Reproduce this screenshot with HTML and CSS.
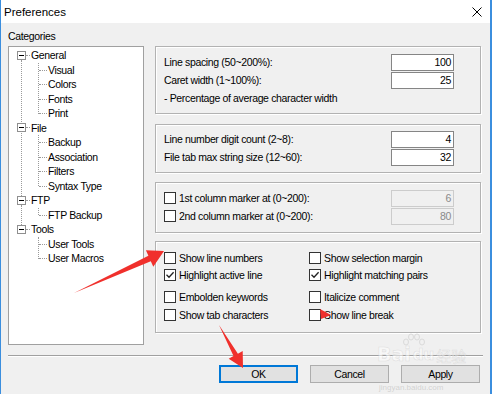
FILE: index.html
```html
<!DOCTYPE html>
<html>
<head>
<meta charset="utf-8">
<link rel="stylesheet" href="styles.css">
</head>
<body>
<div class="window">
  <div class="titlebar">
    <span class="title">Preferences</span>
    <svg class="close" width="10" height="10" viewBox="0 0 10 10"><path d="M0.5 0.5L9.5 9.5M9.5 0.5L0.5 9.5" stroke="#000" stroke-width="1" fill="none"/></svg>
  </div>
  <div class="content">
    <div class="main">
      <div class="left">
        <div class="cat-label">Categories</div>
        <div class="tree">
          <div class="node">
            <div class="trow top"><span class="exp"></span><span>General</span></div>
            <div class="kids">
              <div class="trow kid">Visual</div>
              <div class="trow kid">Colors</div>
              <div class="trow kid">Fonts</div>
              <div class="trow kid">Print</div>
            </div>
          </div>
          <div class="node">
            <div class="trow top"><span class="exp"></span><span>File</span></div>
            <div class="kids">
              <div class="trow kid">Backup</div>
              <div class="trow kid">Association</div>
              <div class="trow kid">Filters</div>
              <div class="trow kid">Syntax Type</div>
            </div>
          </div>
          <div class="node">
            <div class="trow top"><span class="exp"></span><span>FTP</span></div>
            <div class="kids">
              <div class="trow kid">FTP Backup</div>
            </div>
          </div>
          <div class="node">
            <div class="trow top"><span class="exp"></span><span>Tools</span></div>
            <div class="kids">
              <div class="trow kid">User Tools</div>
              <div class="trow kid">User Macros</div>
            </div>
          </div>
        </div>
      </div>
      <div class="right">
        <div class="group g1">
          <div class="frow"><span class="lbl">Line spacing (50~200%):</span><span class="num">100</span></div>
          <div class="frow"><span class="lbl">Caret width (1~100%):</span><span class="num">25</span></div>
          <div class="frow"><span class="lbl">- Percentage of average character width</span></div>
        </div>
        <div class="group g2">
          <div class="frow"><span class="lbl">Line number digit count (2~8):</span><span class="num">4</span></div>
          <div class="frow"><span class="lbl">File tab max string size (12~60):</span><span class="num">32</span></div>
        </div>
        <div class="group g3">
          <div class="frow"><span class="box"></span><span class="lbl">1st column marker at (0~200):</span><span class="num dis">6</span></div>
          <div class="frow"><span class="box"></span><span class="lbl">2nd column marker at (0~200):</span><span class="num dis">80</span></div>
        </div>
        <div class="group g4">
          <div class="cb r1"><span class="box"></span><span>Show line numbers</span></div>
          <div class="cb r1"><span class="box"></span><span>Show selection margin</span></div>
          <div class="cb r1"><span class="box checked"><svg width="10" height="10" viewBox="0 0 10 10"><path d="M1.5 4.8L4 7.3L8.6 2.2" stroke="#222" stroke-width="1.3" fill="none"/></svg></span><span>Highlight active line</span></div>
          <div class="cb r1"><span class="box checked"><svg width="10" height="10" viewBox="0 0 10 10"><path d="M1.5 4.8L4 7.3L8.6 2.2" stroke="#222" stroke-width="1.3" fill="none"/></svg></span><span>Highlight matching pairs</span></div>
          <div class="cb r2 gap"><span class="box"></span><span>Embolden keywords</span></div>
          <div class="cb r2 gap"><span class="box"></span><span>Italicize comment</span></div>
          <div class="cb r2"><span class="box"></span><span>Show tab characters</span></div>
          <div class="cb r2"><span class="box"></span><span>Show line break</span></div>
        </div>
      </div>
    </div>
    <div class="sep"></div>
    <div class="btns">
      <div class="btn ok">OK</div>
      <div class="btn">Cancel</div>
      <div class="btn">Apply</div>
    </div>
  </div>
  <div class="watermark">
    <div class="wm-logo">
      <span class="wm-bai">Bai</span>
      <span class="wm-du">
        <svg class="paw" width="26" height="18" viewBox="0 0 26 18"><g fill="none" stroke="#dadada" stroke-width="1"><ellipse cx="5" cy="9" rx="2.5" ry="3"/><ellipse cx="10" cy="4" rx="2.5" ry="3"/><ellipse cx="16" cy="4" rx="2.5" ry="3"/><ellipse cx="21" cy="9" rx="2.5" ry="3"/></g></svg>
        du
      </span>
      <span class="wm-jy">经验</span>
    </div>
    <div class="wm-url">jingyan.baidu.com</div>
  </div>
  <svg class="arrows" width="492" height="394" viewBox="0 0 492 394">
    <polygon fill="#f0302c" points="73,293 147.4,255.8 144.9,250.3 163,251 152.3,266.7 149.8,261.2"/>
    <polygon fill="#f0302c" points="218,325 236.9,353.7 241.7,351 242,368 227.7,358.8 232.5,356.1"/>
    <polygon fill="#f0302c" points="319,309 330,315 320,319"/>
  </svg>
</div>
</body>
</html>
```

FILE: styles.css
```css
* { box-sizing: border-box; }
html, body { margin: 0; padding: 0; }
body {
  width: 492px;
  height: 394px;
  overflow: hidden;
  font-family: "Liberation Sans", Arial, sans-serif;
  font-size: 10.5px;
  letter-spacing: -0.35px;
  color: #000;
  background: #f0f0f0;
}
.window {
  position: relative;
  width: 492px;
  height: 394px;
  background: #f0f0f0;
  border-left: 1px solid #3b8ede;
  border-right: 2px solid #3b8ede;
}
.titlebar {
  height: 23px;
  background: #fff;
  display: flex;
  align-items: center;
  padding-left: 3px;
}
.title { font-size: 11.5px; letter-spacing: 0; }
.close { margin-left: auto; margin-right: 8px; }
.content { padding: 0 7px; }
.main { display: flex; gap: 11px; }
.left { width: 136px; display: flex; flex-direction: column; }
.cat-label { height: 23px; padding-top: 5px; line-height: 16px; }
.tree {
  height: 299px;
  background: #fff;
  border: 1px solid #a0a0a0;
  padding-top: 1px;
}
.node { position: relative; }
.node:not(:last-child)::after {
  content: "";
  position: absolute;
  left: 12px;
  top: 12px;
  bottom: -3px;
  border-left: 1px dotted #9a9a9a;
}
.trow { height: 14.5px; line-height: 14.5px; position: relative; white-space: nowrap; }
.top { display: flex; align-items: center; padding-left: 8px; }
.exp {
  position: relative;
  flex: none;
  width: 9px;
  height: 9px;
  border: 1px solid #8f8f8f;
  background: #fff;
  margin-right: 5px;
}
.exp::before {
  content: "";
  position: absolute;
  left: 1px;
  top: 3px;
  width: 5px;
  height: 1px;
  background: #000;
}
.exp::after {
  content: "";
  position: absolute;
  left: 8px;
  top: 3px;
  width: 4px;
  border-top: 1px dotted #9a9a9a;
}
.kids { position: relative; }
.kids::before {
  content: "";
  position: absolute;
  left: 29px;
  top: 0;
  bottom: 7px;
  border-left: 1px dotted #9a9a9a;
}
.kid { padding-left: 39px; }
.kid::before {
  content: "";
  position: absolute;
  left: 30px;
  top: 7px;
  width: 8px;
  border-top: 1px dotted #9a9a9a;
}
.right { width: 326px; padding-top: 23px; display: flex; flex-direction: column; }
.group {
  border: 1px solid #b2b2b2;
  box-shadow: inset 1px 1px 0 #fff, 1px 1px 0 #fff;
  padding-left: 8px;
  padding-right: 8px;
}
.g1 { padding-top: 6px; padding-bottom: 6px; }
.g2 { margin-top: 10px; padding-top: 5px; padding-bottom: 6px; }
.g3 { margin-top: 9px; padding-top: 6px; padding-bottom: 7px; }
.g4 {
  margin-top: 8px;
  padding-top: 7px;
  padding-bottom: 8px;
  display: grid;
  grid-template-columns: 145px 1fr;
}
.frow { display: flex; align-items: center; height: 18px; white-space: nowrap; }
.lbl { flex: 1; }
.num {
  flex: none;
  width: 63px;
  height: 17px;
  border: 1px solid #858585;
  background: #fff;
  text-align: right;
  padding-right: 2px;
  line-height: 15px;
  margin-right: 18px;
}
.num.dis { border-color: #cccccc; background: #f0f0f0; color: #8a8a8a; }
.box {
  flex: none;
  width: 12px;
  height: 12px;
  border: 1px solid #333;
  background: #fff;
  margin-right: 3px;
  display: flex;
  align-items: center;
  justify-content: center;
}
.cb { display: flex; align-items: center; white-space: nowrap; }
.r1 { height: 17px; }
.r2 { height: 18px; }
.gap { margin-top: 5px; }
.sep {
  margin-top: 10px;
  width: 475px;
  height: 2px;
  border-top: 1px solid #a0a0a0;
  border-bottom: 1px solid #fff;
}
.btns {
  display: flex;
  justify-content: flex-end;
  gap: 12px;
  padding-right: 3px;
  margin-top: 8px;
}
.btn {
  width: 79px;
  height: 18px;
  border: 1px solid #adadad;
  background: #e1e1e1;
  display: flex;
  align-items: center;
  justify-content: center;
}
.btn.ok { border-color: #0078d7; box-shadow: inset 0 0 0 1px #0078d7; }
.watermark {
  position: absolute;
  left: 376px;
  top: 336px;
  width: 100px;
  pointer-events: none;
  letter-spacing: 0;
}
.wm-logo { display: flex; align-items: flex-end; height: 28px; }
.wm-bai {
  font-family: "DejaVu Sans", sans-serif;
  font-weight: bold;
  font-size: 19px;
  line-height: 19px;
  color: rgba(255, 255, 255, 0.5);
  -webkit-text-stroke: 0.5px rgba(200, 200, 200, 0.55);
}
.wm-du {
  position: relative;
  font-family: "DejaVu Sans", sans-serif;
  font-weight: bold;
  font-size: 15px;
  line-height: 17px;
  color: rgba(255, 255, 255, 0.5);
  -webkit-text-stroke: 0.5px rgba(200, 200, 200, 0.55);
  padding-left: 2px;
}
.paw { position: absolute; left: -10px; top: -14px; }
.wm-jy {
  font-family: "Noto Sans CJK SC", sans-serif;
  font-size: 15px;
  line-height: 17px;
  color: rgba(255, 255, 255, 0.5);
  -webkit-text-stroke: 0.5px rgba(200, 200, 200, 0.55);
  margin-left: 2px;
}
.wm-url {
  font-size: 8px;
  line-height: 9px;
  color: rgba(185, 185, 185, 0.55);
  margin-top: 19px;
  padding-left: 2px;
}
.arrows { position: absolute; left: 0; top: 0; pointer-events: none; }
```
